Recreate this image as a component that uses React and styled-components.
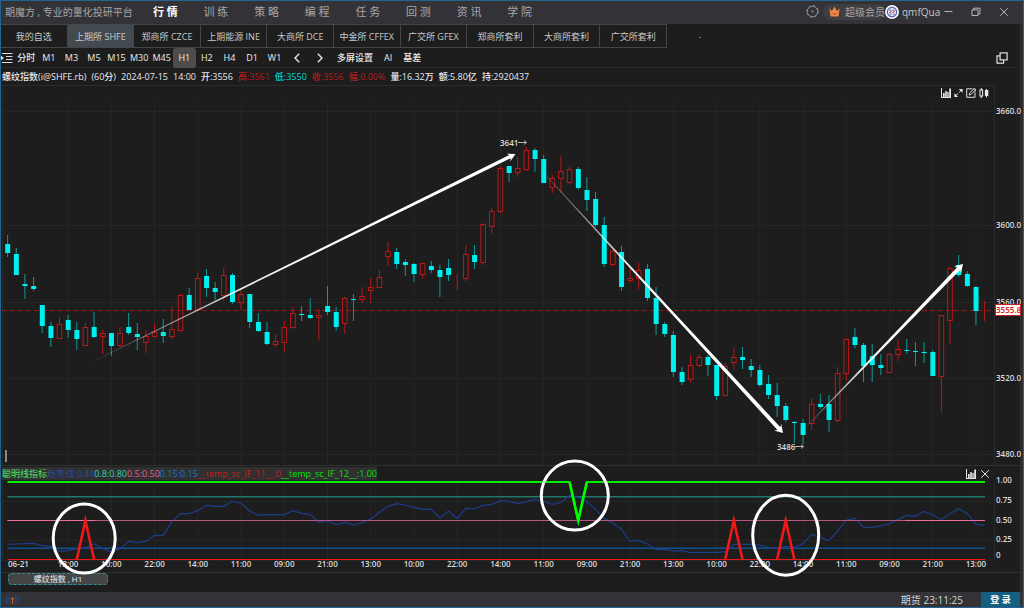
import React from 'react'
import styled, { createGlobalStyle } from 'styled-components'

const FONT = '"Open Sans", "Noto Sans CJK SC", sans-serif'
const UP = '#b81818'
const DOWN = '#00f0f0'
const WICK_DOWN = '#0f9a9a'
const GRID = '#262626'

const FIRST_X = 7.6
const STEP = 8.646
const barX = i => FIRST_X + i * STEP

// [direction, high, body top, body bottom, low]
const candles = [
  ['d', 235, 244, 253, 257], ['d', 248, 254, 275, 275], ['d', 274, 284, 286, 299], ['d', 277, 286, 289, 291],
  ['d', 305, 305, 326, 333], ['d', 322, 326, 338, 347], ['u', 317, 324, 339, 339], ['d', 315, 320, 330, 338],
  ['d', 322, 330, 339, 350], ['u', 323, 327, 346, 346], ['d', 312, 327, 337, 338], ['u', 330, 333, 337, 354],
  ['d', 333, 333, 346, 356], ['u', 327, 333, 346, 347], ['d', 313, 327, 333, 335], ['d', 323, 334, 337, 350],
  ['u', 330, 336, 343, 353], ['u', 323, 332, 337, 337], ['d', 319, 332, 336, 343], ['u', 306, 329, 337, 339],
  ['u', 294, 295, 331, 332], ['d', 288, 295, 310, 310], ['u', 273, 278, 310, 310], ['d', 269, 276, 288, 297],
  ['d', 282, 288, 292, 300], ['u', 268, 275, 296, 301], ['d', 273, 275, 302, 304], ['u', 288, 294, 303, 310],
  ['d', 294, 294, 322, 328], ['d', 313, 322, 331, 332], ['d', 322, 332, 344, 345], ['u', 334, 341, 345, 347],
  ['u', 321, 327, 343, 352], ['u', 307, 313, 328, 329], ['d', 306, 314, 315, 321], ['d', 298, 315, 318, 319],
  ['u', 309, 315, 318, 340], ['d', 286, 306, 312, 315], ['d', 307, 312, 327, 331], ['u', 297, 298, 324, 334],
  ['d', 294, 299, 300, 321], ['u', 287, 296, 300, 303], ['u', 278, 287, 291, 303], ['u', 270, 277, 288, 288],
  ['u', 242, 251, 257, 266], ['d', 248, 252, 264, 269], ['d', 259, 262, 265, 276], ['d', 263, 264, 274, 282],
  ['u', 263, 263, 275, 279], ['d', 261, 266, 270, 273], ['d', 265, 270, 277, 297], ['d', 259, 268, 275, 281],
  ['u', 273, 274, 275, 290], ['u', 245, 254, 279, 281], ['d', 245, 255, 262, 269], ['u', 223, 224, 263, 265],
  ['u', 208, 211, 227, 233], ['u', 166, 168, 212, 213], ['d', 166, 166, 173, 182], ['u', 157, 168, 173, 177],
  ['u', 147, 150, 170, 171], ['d', 148, 150, 159, 172], ['d', 155, 159, 183, 183], ['u', 175, 178, 188, 193],
  ['u', 156, 171, 179, 193], ['u', 167, 169, 183, 184], ['d', 167, 169, 188, 190], ['d', 177, 190, 200, 211],
  ['d', 192, 199, 225, 227], ['d', 217, 225, 264, 267], ['u', 250, 251, 265, 266], ['d', 246, 252, 287, 291],
  ['u', 269, 278, 281, 283], ['u', 263, 270, 279, 289], ['d', 264, 269, 298, 301], ['d', 287, 298, 324, 335],
  ['d', 322, 324, 334, 337], ['d', 331, 335, 372, 377], ['d', 367, 372, 382, 385], ['u', 355, 365, 380, 383],
  ['u', 354, 357, 366, 367], ['d', 355, 357, 365, 376], ['d', 365, 365, 396, 400], ['u', 363, 366, 396, 396],
  ['u', 347, 357, 363, 369], ['d', 347, 357, 360, 369], ['d', 359, 366, 370, 377], ['d', 365, 370, 385, 387],
  ['d', 375, 384, 395, 399], ['d', 383, 395, 406, 417], ['d', 403, 406, 420, 422], ['d', 421, 422, 423, 443],
  ['d', 419, 423, 435, 444], ['u', 398, 404, 424, 430], ['d', 394, 404, 407, 409], ['d', 395, 404, 420, 432],
  ['u', 367, 373, 421, 422], ['u', 338, 339, 374, 381], ['d', 328, 337, 345, 348], ['d', 343, 345, 366, 382],
  ['d', 344, 356, 365, 382], ['d', 354, 365, 368, 375], ['u', 353, 354, 373, 373], ['u', 340, 349, 355, 361],
  ['d', 339, 350, 351, 354], ['d', 342, 351, 352, 366], ['d', 342, 352, 353, 363], ['d', 350, 352, 376, 376],
  ['u', 315, 315, 377, 412], ['u', 267, 268, 321, 344], ['d', 255, 265, 275, 277], ['d', 271, 274, 286, 287],
  ['d', 286, 287, 311, 325], ['u', 301, 310, 310, 321]
]

// trend line, thirds of a unit below the top of the indicator pane
const trend = [
  298, 297, 296, 295, 302, 305, 319, 317, 311, 308, 297, 310, 321, 311, 289, 293, 289, 271, 271, 230,
  206, 206, 197, 181, 184, 184, 169, 174, 198, 211, 209, 209, 209, 197, 205, 208, 232, 227, 239, 232,
  240, 233, 222, 202, 184, 176, 180, 187, 193, 193, 219, 198, 221, 190, 192, 181, 178, 167, 169, 176,
  170, 163, 168, 178, 172, 151, 157, 170, 193, 220, 234, 253, 289, 286, 297, 313, 313, 318, 317, 323,
  322, 322, 322, 320, 298, 298, 298, 300, 308, 309, 304, 307, 296, 268, 278, 287, 258, 225, 220, 247,
  247, 243, 236, 223, 211, 214, 199, 210, 224, 206, 191, 206, 237, 241
]

const times = [
  '13:00', '10:00', '22:00', '14:00', '11:00', '09:00', '21:00', '13:00', '10:00', '22:00', '14:00',
  '11:00', '09:00', '21:00', '13:00', '10:00', '22:00', '14:00', '11:00', '09:00', '21:00', '13:00'
]

const menu = ['行 情', '训 练', '策 略', '编 程', '任 务', '回 测', '资 讯', '学 院']
const exchanges = [
  '我的自选', '上期所 SHFE', '郑商所 CZCE', '上期能源 INE', '大商所 DCE',
  '中金所 CFFEX', '广交所 GFEX', '郑商所套利', '大商所套利', '广交所套利'
]
const periods = ['分时', 'M1', 'M3', 'M5', 'M15', 'M30', 'M45', 'H1', 'H2', 'H4', 'D1', 'W1']
const quotes = [
  ['螺纹指数(i@SHFE.rb)'], ['(60分)'], ['2024-07-15'], ['14:00'], ['开:3556'],
  ['高:3561', '#b81c1c'], ['低:3550', '#00d8d0'], ['收:3556', '#b81c1c'], ['幅:0.00%', '#b81c1c'],
  ['量:16.32万'], ['额:5.80亿'], ['持:2920437']
]
const legend = [
  ['聪明线指标', '#4fe86c'], ['趋势线:0.44', '#2a4a9c'], ['0.8:0.80', '#2cd0b8'], ['0.5:0.50', '#e4608f'],
  ['0.15:0.15', '#1478d4'], ['__temp_sc_IF_11__:0', '#cc1818'], ['__temp_sc_IF_12__:1.00', '#00e400']
]
const prices = [['3660.0', 111], ['3600.0', 225], ['3560.0', 302], ['3520.0', 378], ['3480.0', 454]]
const levels = [['1.00', 480], ['0.75', 500], ['0.50', 520], ['0.25', 539], ['0', 555]]

const GlobalStyle = createGlobalStyle`
  * {
    box-sizing: border-box;
  }
  body {
    margin: 0;
    background: #1d1d1d;
    font-family: ${FONT};
  }
  button {
    font-family: inherit;
    font-weight: inherit;
    margin: 0;
    padding: 0;
    border: 0;
    background: none;
    color: inherit;
    cursor: pointer;
  }
  svg {
    display: block;
  }
`

const Window = styled.div`
  display: flex;
  flex-direction: column;
  min-height: 100vh;
  border: 1px solid #24628f;
  background: #1d1d1d;
  color: #dcdcdc;
  font-size: 9px;
  line-height: 12px;
  white-space: nowrap;
`

const TitleBar = styled.header`
  display: flex;
  align-items: center;
  height: 23px;
  padding-left: 4px;
  padding-bottom: 2px;
  background: #333337;
  color: #a6a6a8;
  font-size: 10px;
`

const Brand = styled.span`
  width: 135px;
`

const Menu = styled.nav`
  display: grid;
  grid-template-columns: repeat(8, 1fr);
  width: 405px;
`

const MenuItem = styled.button`
  font-size: 11px;
  line-height: 16px;
  color: ${props => (props.$active ? '#ffffff' : '#a6a6a8')};
  font-weight: ${props => (props.$active ? 700 : 400)};
`

const Account = styled.div`
  display: flex;
  align-items: center;
  margin-left: auto;
  padding-right: 14px;
`

const Member = styled.button`
  display: flex;
  align-items: center;
  gap: 5px;
  height: 16px;
  width: 62px;
  margin-left: 4px;
  padding-left: 6px;
  border-radius: 8px;
  background: #3e3e40;
  font-size: 10px;
`

const User = styled.span`
  width: 39px;
  margin-left: 3px;
  color: #c4c4c6;
`

const WindowButtons = styled.div`
  display: flex;
  gap: 18px;
  margin-left: 3px;
`

const Body = styled.div`
  display: grid;
  grid-template-columns: 1fr 3px;
  flex: 1;
`

const Edge = styled.div`
  background: #2d2d30;
`

const Content = styled.main`
  display: flex;
  flex-direction: column;
  min-width: 0;
`

const TabRow = styled.nav`
  display: flex;
  height: 24px;
`

const Tabs = styled.div`
  display: grid;
  grid-template-columns: repeat(10, 1fr);
  width: 666px;
  border-top: 1px solid #454545;
  border-bottom: 1px solid #454545;
`

const Tab = styled.button`
  border-right: 1px solid #454545;
  background: ${props => (props.$active ? '#434a50' : 'none')};
  color: #c8c8c8;
  font-size: 9px;
`

const Dot = styled.span`
  margin-left: 32px;
  line-height: 22px;
`

const Toolbar = styled.div`
  display: flex;
  align-items: center;
  height: 20px;
  padding-right: 12px;
  border-bottom: 1px solid #282828;
  color: #ececec;
  font-weight: 500;
`

const Periods = styled.div`
  display: grid;
  grid-template-columns: repeat(14, 1fr);
  width: 316px;
  margin-left: 2px;
`

const Period = styled.button`
  display: flex;
  align-items: center;
  justify-content: center;
  height: 20px;
  border-radius: 3px;
  background: ${props => (props.$active ? '#4d4d4d' : 'none')};
  font-size: 9px;
`

const ToolLinks = styled.div`
  display: flex;
  gap: 11px;
  flex: 1;
  margin-left: 6px;
`

const ToolLink = styled.button`
  font-size: 9px;
`

const QuoteRow = styled.div`
  display: flex;
  align-items: center;
  gap: 5px;
  height: 17px;
  padding-left: 1px;
  font-weight: 500;
`

const Quote = styled.span`
  color: ${props => props.$color || '#e6eaf4'};
`

const Chart = styled.section`
  position: relative;

  > svg {
    width: 100%;
    height: auto;
    overflow: visible;
  }

  text {
    font-family: ${FONT};
    font-size: 8px;
    font-weight: 600;
    fill: #dcdcdc;
  }
`

const ChartTools = styled.div`
  position: absolute;
  top: 3px;
  right: 31px;
  display: flex;
  gap: 3px;
`

const Legend = styled.div`
  display: flex;
  align-items: center;
  justify-content: space-between;
  height: 16px;
  padding: 0 30px 0 1px;
  border-top: 1px solid #303030;
`

const LegendText = styled.div`
  display: flex;
  line-height: 13px;
  background: #303030;
`

const LegendTools = styled.div`
  display: flex;
  gap: 4px;
`

const Marks = styled.svg`
  position: absolute;
  left: 0;
  top: 0;
  pointer-events: none;
`

const Sheets = styled.div`
  flex: 1;
  padding-left: 7px;
  border-top: 1px solid #303030;
`

const Sheet = styled.button`
  display: block;
  width: 100px;
  height: 12px;
  border: 1px dashed #2f8f8c;
  border-radius: 4px;
  background: #434547;
  color: #f0f0f0;
  font-size: 8px;
  line-height: 10px;
`

const StatusBar = styled.footer`
  display: flex;
  align-items: center;
  height: 15px;
  padding: 0 3px 0 4px;
  background: #333337;
`

const Clock = styled.span`
  margin-left: auto;
  margin-right: 18px;
  font-size: 10px;
  color: #d4d4d4;
`

const Login = styled.button`
  width: 39px;
  height: 15px;
  background: #155f80;
  color: #ffffff;
  font-size: 9px;
  font-weight: 700;
`

const GearIcon = () => (
  <svg width="13" height="13" viewBox="0 0 13 13" fill="none" stroke="#8d939c">
    <circle cx="6.5" cy="6.5" r="5.2" />
    <circle cx="6.5" cy="6.5" r="5.9" strokeDasharray="2 2.6" />
    <circle cx="6.5" cy="6.5" r="1" fill="#8d939c" stroke="none" />
  </svg>
)

const CrownIcon = () => (
  <svg width="11" height="11" viewBox="0 0 11 11" fill="#ef8648">
    <path d="M0.4 2.6 L3 5 L5.4 0.6 L8 5 L10.6 2.6 L9.5 10.4 H1.5 Z" />
    <path d="M3.6 7 L5.4 8.6 L7.4 7" fill="none" stroke="#9a4a20" />
  </svg>
)

const AvatarIcon = () => (
  <svg width="14" height="14" viewBox="0 0 14 14">
    <circle cx="7" cy="7" r="7" fill="#f4f4f8" />
    <circle cx="7" cy="7" r="4.6" fill="none" stroke="#5266a8" strokeWidth="1.2" />
    <path d="M3 5.2 H11 M3 9.2 H11 M5.4 3 V11 M8.8 3 V11" stroke="#7787bd" strokeWidth="0.7" />
    <path d="M4 8 L6 6.4 L8 7.6 L10.2 5.6" fill="none" stroke="#d05a5a" />
  </svg>
)

const MinIcon = () => (
  <svg width="9" height="9" viewBox="0 0 9 9" stroke="#b4b4b6"><path d="M0.5 4.5 H8.5" /></svg>
)

const RestoreIcon = () => (
  <svg width="10" height="10" viewBox="0 0 10 10" fill="none" stroke="#b4b4b6">
    <path d="M1 2.9 H7.1 V8.5 H1 Z M2.6 2.9 V1.2 H9 V7 H7.1" />
  </svg>
)

const CloseIcon = ({ color = '#b4b4b6' }) => (
  <svg width="10" height="10" viewBox="0 0 10 10" stroke={color}><path d="M1.2 1.2 L8.8 8.8 M8.8 1.2 L1.2 8.8" /></svg>
)

const ListIcon = () => (
  <svg width="12" height="12" viewBox="0 0 12 12" stroke="#dcdcdc">
    <path d="M1 1.5 H11.5 M5 4.5 H11.5 M5 7.5 H11.5 M1 10.5 H11.5" />
    <path d="M0 3.8 L3 6 L0 8.2 Z" fill="#dcdcdc" stroke="none" />
  </svg>
)

const ChevronIcon = ({ right }) => (
  <svg width="6" height="10" viewBox="0 0 6 10" fill="none" stroke="#e6e6e6" strokeWidth="1.4">
    <path d={right ? 'M0.8 0.8 L5 5 L0.8 9.2' : 'M5.2 0.8 L1 5 L5.2 9.2'} />
  </svg>
)

const CopyIcon = () => (
  <svg width="12" height="12" viewBox="0 0 12 12" fill="none" stroke="#e0e0e0" strokeWidth="1.2">
    <rect x="4.1" y="0.9" width="7" height="7" />
    <path d="M4 3.8 H1 V11.1 H7.6 V8" />
  </svg>
)

const BarsIcon = () => (
  <svg width="10" height="10" viewBox="0 0 10 10" fill="#e4e4e4">
    <path d="M0 0 H1 V9 H10 V10 H0 Z M2 5 H3.7 V9 H2 Z M4.2 3 H5.8 V9 H4.2 Z M6.3 4 H7.7 V9 H6.3 Z M8.2 0.4 H10 V9 H8.2 Z" />
  </svg>
)

const ExpandIcon = () => (
  <svg width="9" height="10" viewBox="0 0 9 10" fill="#e4e4e4">
    <path d="M4.8 1 H8.6 V4.8 Z M0.4 5.2 V9 H4.2 Z" />
    <path d="M1.6 7.8 L7.6 2" stroke="#e4e4e4" strokeDasharray="3.4 1.4" />
  </svg>
)

const EditIcon = () => (
  <svg width="10" height="10" viewBox="0 0 10 10" fill="none" stroke="#e0e0e0">
    <path d="M6 0.8 H0.7 V9.3 H9 V4.4" />
    <path d="M3.2 7 L3.6 5 L8.2 0.6 L9.6 1.9 L5.1 6.4 Z" />
    <path d="M6.4 0.8 H9.3 V4" strokeWidth="0.6" />
  </svg>
)

const CandleIcon = () => (
  <svg width="10" height="10" viewBox="0 0 10 10" fill="none" stroke="#f0f0f0">
    <path d="M2.3 0 V2 M2.3 8 V10" />
    <rect x="1" y="2" width="2.6" height="6" />
    <path d="M7.5 1 V9.4" />
    <rect x="6.4" y="2.6" width="2.4" height="4.8" fill="#f0f0f0" />
  </svg>
)

const SignalIcon = () => (
  <svg width="15" height="12" viewBox="0 0 15 12" fill="none" stroke="#2f4f96">
    <path d="M5 2.4 C3.6 4 3.6 7 5 8.6 M3 1.2 C0.8 3.6 0.8 7.4 3 9.8 M10 2.4 C11.4 4 11.4 7 10 8.6 M12 1.2 C14.2 3.6 14.2 7.4 12 9.8" />
    <circle cx="7.5" cy="4.8" r="1.3" fill="#c4622a" stroke="none" />
    <path d="M7.5 5 V10" stroke="#c4622a" />
  </svg>
)

// tapered arrow that fades in from its tail
const Arrow = ({ id, from, to, width }) => {
  const len = Math.hypot(to[0] - from[0], to[1] - from[1])
  const ux = (to[0] - from[0]) / len
  const uy = (to[1] - from[1]) / len
  const at = (back, side) => `${to[0] - ux * back - uy * side},${to[1] - uy * back + ux * side}`
  const points = [
    at(len, 0.3), at(6, width / 2), at(8, width + 0.9), at(0, 0),
    at(8, -width - 0.9), at(6, -width / 2), at(len, -0.3)
  ].join(' ')
  return (
    <g>
      <linearGradient id={id} gradientUnits="userSpaceOnUse" x1={from[0]} y1={from[1]} x2={to[0]} y2={to[1]}>
        <stop offset="0" stopColor="#fff" stopOpacity="0.1" />
        <stop offset="0.35" stopColor="#fff" stopOpacity="0.9" />
        <stop offset="0.5" stopColor="#fff" />
      </linearGradient>
      <polygon points={points} fill={`url(#${id})`} />
    </g>
  )
}

const Candle = ({ x, bar }) => {
  const [dir, high, top, bottom, low] = bar
  if (dir === 'd') {
    return (
      <g>
        <path d={`M${x} ${high} V${low}`} stroke={WICK_DOWN} />
        <rect x={x - 2.4} y={top} width="5" height={Math.max(bottom - top, 1)} fill={DOWN} />
      </g>
    )
  }
  return (
    <g stroke={UP} fill="none">
      <path d={`M${x} ${high} V${top} M${x} ${bottom} V${low}`} />
      <rect x={x - 2.3} y={top + 0.5} width="4.6" height={Math.max(bottom - top - 1, 0)} />
    </g>
  )
}

const columns = times.map((_, i) => barX(7 + i * 5))

const PriceChart = () => (
  <svg viewBox="1 85 1019 380">
    <path d="M1 85.5 H995 M994.5 85 V465 M2.5 85 V465" stroke="#2b2b2b" />
    {prices.map(([label, y]) => <path key={label} d={`M2 ${y + 0.5} H995`} stroke={GRID} />)}
    {columns.map(x => <path key={x} d={`M${x} 101 V465`} stroke={GRID} />)}
    <path d="M2 310.5 H995" stroke="#8c1a1a" strokeDasharray="5 3" />
    {candles.map((bar, i) => <Candle key={i} x={barX(i)} bar={bar} />)}
    <Arrow id="rise" from={[94, 361]} to={[515.5, 154]} width={3.4} />
    <Arrow id="fall" from={[540, 169]} to={[783, 433]} width={4} />
    <Arrow id="rebound" from={[806, 427]} to={[963, 264]} width={4} />
    <text x="500" y="146">3641</text>
    <path d="M518 142.5 H526 M524 140.5 L526.5 142.5 L524 144.5" fill="none" stroke="#dcdcdc" strokeWidth="0.8" />
    <text x="777" y="450">3486</text>
    <path d="M795 446.5 H803 M801 444.5 L803.5 446.5 L801 448.5" fill="none" stroke="#dcdcdc" strokeWidth="0.8" />
    <path d="M6 450 V462" stroke="#8a8a8a" strokeWidth="2" />
    {prices.map(([label, y]) => <text key={label} x="996" y={y + 3}>{label}</text>)}
    <rect x="995.5" y="304.5" width="25" height="11" fill="#fff" stroke="#c42020" />
    <text x="996" y="313" style={{ fill: '#d02020' }}>3555.8</text>
  </svg>
)

const spike = (i, base) => `L${barX(i - 1)} ${base} L${barX(i)} 520.5 L${barX(i + 1)} ${base}`

const IndicatorChart = () => (
  <svg viewBox="1 481 1019 91">
    <path d="M2 501.5 H995 M2 540.5 H995 M2 560.5 H995" stroke={GRID} />
    <path d="M994.5 481 V560 M2.5 481 V560" stroke="#2b2b2b" />
    {columns.map(x => <path key={x} d={`M${x} 481 V560`} stroke={GRID} />)}
    <path d="M7.5 496.7 H985" stroke="#20776a" strokeWidth="1.6" />
    <path d="M7.5 548.3 H985" stroke="#0f5090" strokeWidth="1.6" />
    <polyline
      points={trend.map((v, i) => `${barX(i)},${445 + v / 3}`).join(' ')}
      fill="none"
      stroke="#1c3c8c"
      strokeWidth="1.2"
    />
    <path d="M7.5 520.5 H985" stroke="#b85482" />
    <path d="M7.5 520.5 H95 M905 520.5 H985" stroke="#f06c9c" />
    {times.map((time, i) => (
      <text key={i} x={columns[i]} y="567" textAnchor="middle">{time}</text>
    ))}
    <text x="8" y="567">06-21</text>
    {levels.slice(1).map(([label, y]) => <text key={label} x="996" y={y + 3}>{label}</text>)}
    <path d="M7.5 559.5 H985" stroke="#f01818" />
    {[9, 84, 90].map(i => (
      <path key={i} d={spike(i, 559.5).replace('L', 'M')} fill="none" stroke="#f01818" strokeWidth="2.6" strokeMiterlimit="12" />
    ))}
  </svg>
)

const App = () => (
  <>
    <GlobalStyle />
    <Window>
      <TitleBar>
        <Brand>期魔方 , 专业的量化投研平台</Brand>
        <Menu>
          {menu.map((item, i) => <MenuItem key={item} $active={i === 0}>{item}</MenuItem>)}
        </Menu>
        <Account>
          <button aria-label="设置"><GearIcon /></button>
          <Member><CrownIcon />超级会员</Member>
          <AvatarIcon />
          <User>qmfQua</User>
          <WindowButtons>
            <button aria-label="最小化"><MinIcon /></button>
            <button aria-label="还原"><RestoreIcon /></button>
            <button aria-label="关闭"><CloseIcon /></button>
          </WindowButtons>
        </Account>
      </TitleBar>
      <Body>
        <Content>
          <TabRow>
            <Tabs>
              {exchanges.map((item, i) => <Tab key={item} $active={i === 1}>{item}</Tab>)}
            </Tabs>
            <Dot>.</Dot>
          </TabRow>
          <Toolbar>
            <button aria-label="列表"><ListIcon /></button>
            <Periods>
              {periods.map(item => <Period key={item} $active={item === 'H1'}>{item}</Period>)}
              <Period aria-label="上一个"><ChevronIcon /></Period>
              <Period aria-label="下一个"><ChevronIcon right /></Period>
            </Periods>
            <ToolLinks>
              <ToolLink>多屏设置</ToolLink>
              <ToolLink>AI</ToolLink>
              <ToolLink>基差</ToolLink>
            </ToolLinks>
            <button aria-label="新窗口"><CopyIcon /></button>
          </Toolbar>
          <QuoteRow>
            {quotes.map(([text, color]) => <Quote key={text} $color={color}>{text}</Quote>)}
          </QuoteRow>
          <Chart>
            <PriceChart />
            <ChartTools>
              <button aria-label="指标"><BarsIcon /></button>
              <button aria-label="放大"><ExpandIcon /></button>
              <button aria-label="编辑"><EditIcon /></button>
              <button aria-label="K线"><CandleIcon /></button>
            </ChartTools>
            <Legend>
              <LegendText>
                {legend.map(([text, color]) => <Quote key={text} $color={color}>{text}</Quote>)}
              </LegendText>
              <LegendTools>
                <button aria-label="指标设置"><BarsIcon /></button>
                <button aria-label="关闭指标"><CloseIcon color="#e4e4e4" /></button>
              </LegendTools>
            </Legend>
            <IndicatorChart />
            <Marks viewBox="1 85 1019 487">
              <text x="996" y="483">1.00</text>
              <path
                d={`M7.5 482 ${spike(66, 482)} H985`}
                fill="none"
                stroke="#00f000"
                strokeWidth="2"
              />
              <path d={spike(66, 482).replace('L', 'M')} fill="none" stroke="#00ff00" strokeWidth="2.6" strokeMiterlimit="12" />
              <g fill="none" stroke="#fff" strokeWidth="3">
                <ellipse cx="84.2" cy="538.5" rx="31" ry="34.5" />
                <ellipse cx="574.8" cy="495.6" rx="33.5" ry="34.5" />
                <ellipse cx="785.7" cy="535.2" rx="33" ry="40" />
              </g>
            </Marks>
          </Chart>
          <Sheets>
            <Sheet>螺纹指数 , H1</Sheet>
          </Sheets>
        </Content>
        <Edge />
      </Body>
      <StatusBar>
        <SignalIcon />
        <Clock>期货 23:11:25</Clock>
        <Login>登 录</Login>
      </StatusBar>
    </Window>
  </>
)

export default App
